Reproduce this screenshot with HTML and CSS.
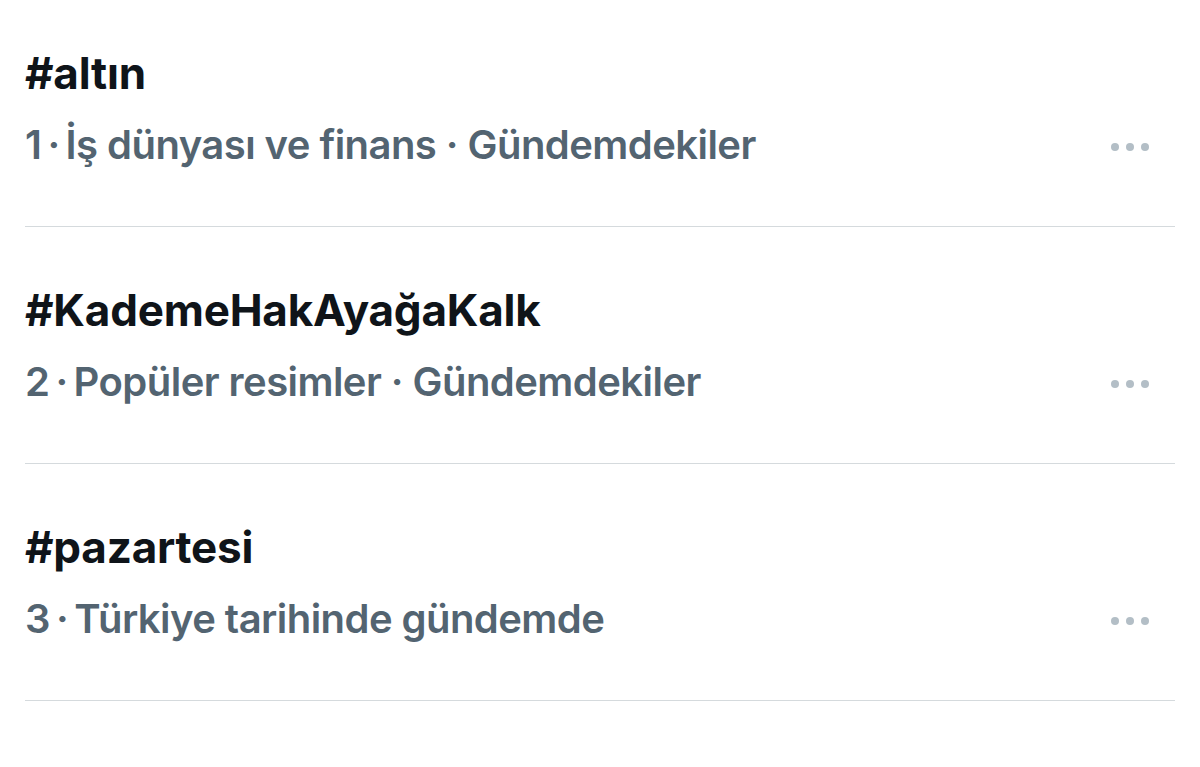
FILE: index.html
```html
<!DOCTYPE html>
<html lang="tr">
<head>
<meta charset="utf-8">
<title>Gündem</title>
<link rel="stylesheet" href="styles.css">
</head>
<body>
<main class="trends">
  <section class="trend">
    <div class="trend-text">
      <div class="trend-title">#altın</div>
      <div class="trend-meta"><span class="rank">1</span><span class="sep">·</span>İş dünyası ve finans · Gündemdekiler</div>
    </div>
    <div class="more" aria-label="Daha fazla"><span></span><span></span><span></span></div>
  </section>
  <section class="trend">
    <div class="trend-text">
      <div class="trend-title">#KademeHakAyağaKalk</div>
      <div class="trend-meta"><span class="rank">2</span><span class="sep">·</span>Popüler resimler · Gündemdekiler</div>
    </div>
    <div class="more" aria-label="Daha fazla"><span></span><span></span><span></span></div>
  </section>
  <section class="trend">
    <div class="trend-text">
      <div class="trend-title">#pazartesi</div>
      <div class="trend-meta"><span class="rank">3</span><span class="sep">·</span>Türkiye tarihinde gündemde</div>
    </div>
    <div class="more" aria-label="Daha fazla"><span></span><span></span><span></span></div>
  </section>
</main>
</body>
</html>
```

FILE: styles.css
```css
html, body {
  margin: 0;
  padding: 0;
  background: #ffffff;
}

body {
  font-family: Inter, "Noto Sans", "Liberation Sans", sans-serif;
  width: 1200px;
  height: 767px;
  overflow: hidden;
}

.trends {
  padding: 0 25px;
}

.trend {
  display: flex;
  align-items: flex-end;
  justify-content: space-between;
  padding: 59px 0 59px;
  border-bottom: 1px solid #d5dadd;
}

.trend:first-child {
  padding-top: 49px;
}

.trend-text {
  display: flex;
  flex-direction: column;
  gap: 26px;
}

.trend-title {
  font-size: 44px;
  line-height: 48px;
  font-weight: 700;
  color: #0f1419;
  letter-spacing: -0.2px;
}

.trend-meta {
  font-size: 40px;
  line-height: 44px;
  font-weight: 600;
  color: #536471;
  letter-spacing: -0.55px;
}

.sep {
  margin: 0 6px;
}

.more {
  display: flex;
  gap: 7px;
  margin-right: 26px;
  margin-bottom: 16px;
}

.more span {
  width: 8px;
  height: 8px;
  border-radius: 50%;
  background: #b3bec6;
}
```
